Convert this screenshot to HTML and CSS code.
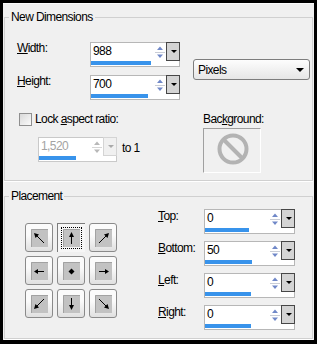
FILE: index.html
```html
<!DOCTYPE html>
<html>
<head>
<meta charset="utf-8">
<link rel="stylesheet" href="styles.css">
</head>
<body>
<div class="frame">
  <fieldset class="group group-dims">
    <legend>New Dimensions</legend>
    <div class="dims-top">
      <div class="dims-fields">
        <div class="field-row">
          <label class="lbl lbl-dim"><u>W</u>idth:</label>
          <div class="spin spin-dim">
            <div class="spin-text">988</div>
            <div class="spin-arrows"><svg width="12" height="18" viewBox="0 0 12 18"><line x1="1" y1="9.5" x2="11" y2="9.5" stroke="#c9cdd6"/><polygon points="3,7 6,3.5 9,7" fill="#7088c8"/><polygon points="3,11.5 6,15 9,11.5" fill="#7088c8"/></svg></div>
            <div class="spin-drop"><span class="tri"></span></div>
            <div class="spin-bar"><div class="spin-fill" style="width:60px"></div></div>
          </div>
        </div>
        <div class="field-row">
          <label class="lbl lbl-dim"><u>H</u>eight:</label>
          <div class="spin spin-dim">
            <div class="spin-text">700</div>
            <div class="spin-arrows"><svg width="12" height="18" viewBox="0 0 12 18"><line x1="1" y1="9.5" x2="11" y2="9.5" stroke="#c9cdd6"/><polygon points="3,7 6,3.5 9,7" fill="#7088c8"/><polygon points="3,11.5 6,15 9,11.5" fill="#7088c8"/></svg></div>
            <div class="spin-drop"><span class="tri"></span></div>
            <div class="spin-bar"><div class="spin-fill" style="width:57px"></div></div>
          </div>
        </div>
      </div>
      <div class="select"><span class="select-text">Pixels</span><span class="select-tri"></span></div>
    </div>
    <div class="dims-bottom">
      <div class="lock-col">
        <div class="check-row"><span class="checkbox"></span><span class="lbl">Lock <u>a</u>spect ratio:</span></div>
        <div class="ratio-row">
          <div class="spin spin-ratio spin-disabled">
            <div class="spin-text">1,520</div>
            <div class="spin-arrows"><svg width="12" height="18" viewBox="0 0 12 18"><line x1="1" y1="9.5" x2="11" y2="9.5" stroke="#d6d6d6"/><polygon points="3,7 6,3.5 9,7" fill="#b8b8b8"/><polygon points="3,11.5 6,15 9,11.5" fill="#b8b8b8"/></svg></div>
            <div class="spin-drop"><span class="tri"></span></div>
            <div class="spin-bar"><div class="spin-fill" style="width:37px"></div></div>
          </div>
          <span class="lbl to">to 1</span>
        </div>
      </div>
      <div class="bg-col">
        <div class="lbl">Bac<u>k</u>ground:</div>
        <div class="bg-box">
          <svg width="56" height="43" viewBox="0 0 56 43"><circle cx="29" cy="20" r="13.5" fill="none" stroke="#b3b3b3" stroke-width="4"/><line x1="19.5" y1="10.5" x2="38.5" y2="29.5" stroke="#b3b3b3" stroke-width="4"/></svg>
        </div>
      </div>
    </div>
  </fieldset>

  <fieldset class="group group-place">
    <legend>Placement</legend>
    <div class="place-body">
      <div class="anchors">
        <div class="pbtn"><svg class="sq" width="17" height="18" viewBox="0 0 17 18"><rect width="17" height="18" fill="#c2c2c2"/><path d="M0.5 18V0.5H17" fill="none" stroke="#a2a2a2"/><line x1="5.5" y1="6.5" x2="13" y2="14" stroke="#000"/><polygon points="3,4 8,5.5 4.5,9" fill="#000"/></svg></div>
        <div class="pbtn active"><svg class="sq" width="17" height="18" viewBox="0 0 17 18"><rect width="17" height="18" fill="#c2c2c2"/><path d="M0.5 18V0.5H17" fill="none" stroke="#a2a2a2"/><line x1="8.5" y1="6" x2="8.5" y2="15" stroke="#000"/><polygon points="8.5,3 6,8 11,8" fill="#000"/></svg></div>
        <div class="pbtn"><svg class="sq" width="17" height="18" viewBox="0 0 17 18"><rect width="17" height="18" fill="#c2c2c2"/><path d="M0.5 18V0.5H17" fill="none" stroke="#a2a2a2"/><line x1="11.5" y1="6.5" x2="4" y2="14" stroke="#000"/><polygon points="14,4 9,5.5 12.5,9" fill="#000"/></svg></div>

        <div class="pbtn"><svg class="sq" width="17" height="18" viewBox="0 0 17 18"><rect width="17" height="18" fill="#c2c2c2"/><path d="M0.5 18V0.5H17" fill="none" stroke="#a2a2a2"/><line x1="6" y1="9.5" x2="13" y2="9.5" stroke="#000"/><polygon points="3,9.5 7,7 7,12" fill="#000"/></svg></div>
        <div class="pbtn"><svg class="sq" width="17" height="18" viewBox="0 0 17 18"><rect width="17" height="18" fill="#c2c2c2"/><path d="M0.5 18V0.5H17" fill="none" stroke="#a2a2a2"/><polygon points="8.5,6.5 11.5,9.5 8.5,12.5 5.5,9.5" fill="#000"/></svg></div>
        <div class="pbtn"><svg class="sq" width="17" height="18" viewBox="0 0 17 18"><rect width="17" height="18" fill="#c2c2c2"/><path d="M0.5 18V0.5H17" fill="none" stroke="#a2a2a2"/><line x1="4" y1="9.5" x2="11" y2="9.5" stroke="#000"/><polygon points="14,9.5 10,7 10,12" fill="#000"/></svg></div>

        <div class="pbtn"><svg class="sq" width="17" height="18" viewBox="0 0 17 18"><rect width="17" height="18" fill="#c2c2c2"/><path d="M0.5 18V0.5H17" fill="none" stroke="#a2a2a2"/><line x1="5.5" y1="11.5" x2="13" y2="4" stroke="#000"/><polygon points="3,14 4.5,9 8,12.5" fill="#000"/></svg></div>
        <div class="pbtn"><svg class="sq" width="17" height="18" viewBox="0 0 17 18"><rect width="17" height="18" fill="#c2c2c2"/><path d="M0.5 18V0.5H17" fill="none" stroke="#a2a2a2"/><line x1="8.5" y1="3" x2="8.5" y2="12" stroke="#000"/><polygon points="8.5,15 6,10 11,10" fill="#000"/></svg></div>
        <div class="pbtn"><svg class="sq" width="17" height="18" viewBox="0 0 17 18"><rect width="17" height="18" fill="#c2c2c2"/><path d="M0.5 18V0.5H17" fill="none" stroke="#a2a2a2"/><line x1="11.5" y1="11.5" x2="4" y2="4" stroke="#000"/><polygon points="14,14 12.5,9 9,12.5" fill="#000"/></svg></div>
      </div>
      <div class="place-fields">
        <div class="field-row">
          <label class="lbl lbl-place"><u>T</u>op:</label>
          <div class="spin spin-place">
            <div class="spin-text">0</div>
            <div class="spin-arrows"><svg width="12" height="18" viewBox="0 0 12 18"><line x1="1" y1="9.5" x2="11" y2="9.5" stroke="#c9cdd6"/><polygon points="3,7 6,3.5 9,7" fill="#7088c8"/><polygon points="3,11.5 6,15 9,11.5" fill="#7088c8"/></svg></div>
            <div class="spin-drop"><span class="tri"></span></div>
            <div class="spin-bar"><div class="spin-fill" style="width:44px"></div></div>
          </div>
        </div>
        <div class="field-row">
          <label class="lbl lbl-place"><u>B</u>ottom:</label>
          <div class="spin spin-place">
            <div class="spin-text">50</div>
            <div class="spin-arrows"><svg width="12" height="18" viewBox="0 0 12 18"><line x1="1" y1="9.5" x2="11" y2="9.5" stroke="#c9cdd6"/><polygon points="3,7 6,3.5 9,7" fill="#7088c8"/><polygon points="3,11.5 6,15 9,11.5" fill="#7088c8"/></svg></div>
            <div class="spin-drop"><span class="tri"></span></div>
            <div class="spin-bar"><div class="spin-fill" style="width:47px"></div></div>
          </div>
        </div>
        <div class="field-row">
          <label class="lbl lbl-place"><u>L</u>eft:</label>
          <div class="spin spin-place">
            <div class="spin-text">0</div>
            <div class="spin-arrows"><svg width="12" height="18" viewBox="0 0 12 18"><line x1="1" y1="9.5" x2="11" y2="9.5" stroke="#c9cdd6"/><polygon points="3,7 6,3.5 9,7" fill="#7088c8"/><polygon points="3,11.5 6,15 9,11.5" fill="#7088c8"/></svg></div>
            <div class="spin-drop"><span class="tri"></span></div>
            <div class="spin-bar"><div class="spin-fill" style="width:46px"></div></div>
          </div>
        </div>
        <div class="field-row">
          <label class="lbl lbl-place"><u>R</u>ight:</label>
          <div class="spin spin-place">
            <div class="spin-text">0</div>
            <div class="spin-arrows"><svg width="12" height="18" viewBox="0 0 12 18"><line x1="1" y1="9.5" x2="11" y2="9.5" stroke="#c9cdd6"/><polygon points="3,7 6,3.5 9,7" fill="#7088c8"/><polygon points="3,11.5 6,15 9,11.5" fill="#7088c8"/></svg></div>
            <div class="spin-drop"><span class="tri"></span></div>
            <div class="spin-bar"><div class="spin-fill" style="width:46px"></div></div>
          </div>
        </div>
      </div>
    </div>
  </fieldset>
</div>
</body>
</html>
```

FILE: styles.css
```css
* { box-sizing: border-box; }
html, body { margin: 0; padding: 0; }
body {
  background: #000;
  padding: 3px 3px 4px 3px;
  font-family: "Liberation Sans", Arial, sans-serif;
  font-size: 12px;
  letter-spacing: -0.6px;
  color: #000;
}
.frame {
  width: 311px;
  height: 337px;
  background: #f0f0f0;
  border-top: 1px solid #fbfbfb;
  overflow: hidden;
}
.group {
  margin: 0 1px;
  padding: 0;
  border: 1px solid #d0d0d0;
  box-shadow: 0 1px 0 #fff;
  min-width: 0;
}
.group legend {
  margin-left: 4px;
  padding: 0 2px;
  line-height: 13px;
  font-size: 12px;
}
.group-dims { margin-top: 7px; height: 170px; }
.group-place { margin-top: 9px; height: 149px; }

.lbl { line-height: 14px; white-space: nowrap; }
u { text-decoration-thickness: 1px; text-underline-offset: 1px; }

.dims-top { display: flex; padding-left: 12px; margin-top: 18px; }
.dims-fields { display: flex; flex-direction: column; gap: 8px; }
.field-row { display: flex; align-items: flex-start; }
.lbl-dim { width: 73px; margin-top: -1px; }
.lbl-place { width: 46px; margin-top: 0; }

.spin {
  display: grid;
  grid-template-columns: 1fr 12px 13px;
  grid-template-rows: 18px 4px 1px;
  border: 1px solid #b7b7b7;
  background: #fff;
  height: 25px;
}
.spin-dim { width: 90px; }
.spin-place { width: 91px; }
.spin-ratio { width: 79px; border-color: #c9c9c9; }
.spin-text {
  padding-left: 2px;
  line-height: 16px;
  font-size: 12px;
}
.spin-arrows { display: flex; }
.spin-drop {
  margin: -1px -1px 0 0;
  border: 1px solid #474747;
  background: #d4d4d4;
  display: flex;
  align-items: center;
  justify-content: center;
}
.tri {
  width: 0; height: 0;
  border-left: 3px solid transparent;
  border-right: 3px solid transparent;
  border-top: 3px solid #000;
  margin-left: 1px;
}
.spin-bar { grid-column: 1 / -1; grid-row: 2; }
.spin-fill { height: 4px; background: #3893eb; }
.spin-disabled .spin-text { color: #a3a3a3; }
.spin-disabled .spin-drop { border-color: #d4d4d4; background: #f0f0f0; }
.spin-disabled .tri { border-top-color: #a9a9a9; }

.select {
  margin-left: 13px;
  margin-top: 17px;
  width: 117px;
  height: 21px;
  border: 1px solid #7d7d7d;
  border-radius: 3px;
  background: linear-gradient(#fdfdfd, #e6e6e6);
  display: flex;
  align-items: center;
  justify-content: space-between;
  padding: 0 5px 0 4px;
}
.select-text { line-height: 14px; }
.select-tri {
  width: 0; height: 0;
  border-left: 4px solid transparent;
  border-right: 4px solid transparent;
  border-top: 4px solid #000;
}

.dims-bottom { display: flex; margin-top: 12px; padding-left: 14px; }
.lock-col { width: 184px; }
.check-row { display: flex; align-items: center; height: 14px; }
.checkbox {
  width: 13px; height: 13px;
  border: 1px solid #8f8f8f;
  background: linear-gradient(135deg, #d9d9d9, #fbfbfb);
  margin-right: 3px;
}
.ratio-row { display: flex; align-items: flex-start; margin-top: 11px; padding-left: 19px; }
.to { margin-left: 5px; margin-top: 4px; }
.bg-col { display: flex; flex-direction: column; }
.bg-box {
  margin-top: 2px;
  width: 58px;
  height: 45px;
  border-top: 1px solid #a0a0a0;
  border-left: 1px solid #a0a0a0;
  border-right: 1px solid #fff;
  border-bottom: 1px solid #fff;
}
.bg-box svg { display: block; }

.place-body { display: flex; padding-left: 20px; }
.anchors {
  display: grid;
  grid-template-columns: repeat(3, 28px);
  grid-auto-rows: 29px;
  gap: 4px;
  margin-top: 20px;
}
.pbtn {
  border: 1px solid #8a8a8a;
  border-radius: 3px;
  background: linear-gradient(#fbfbfb 40%, #e0e0e0);
  display: flex;
  align-items: center;
  justify-content: center;
}
.pbtn.active {
  border: 0;
  border-top: 1px solid #7c7c7c;
  border-left: 1px solid #7c7c7c;
  border-radius: 0;
  background: #f6f6f6;
}
.pbtn.active .sq { outline: 1px dotted #000; outline-offset: 1px; }
.sq { display: block; }
.place-fields {
  display: flex;
  flex-direction: column;
  gap: 7px;
  margin-left: 41px;
  margin-top: 6px;
}
```
